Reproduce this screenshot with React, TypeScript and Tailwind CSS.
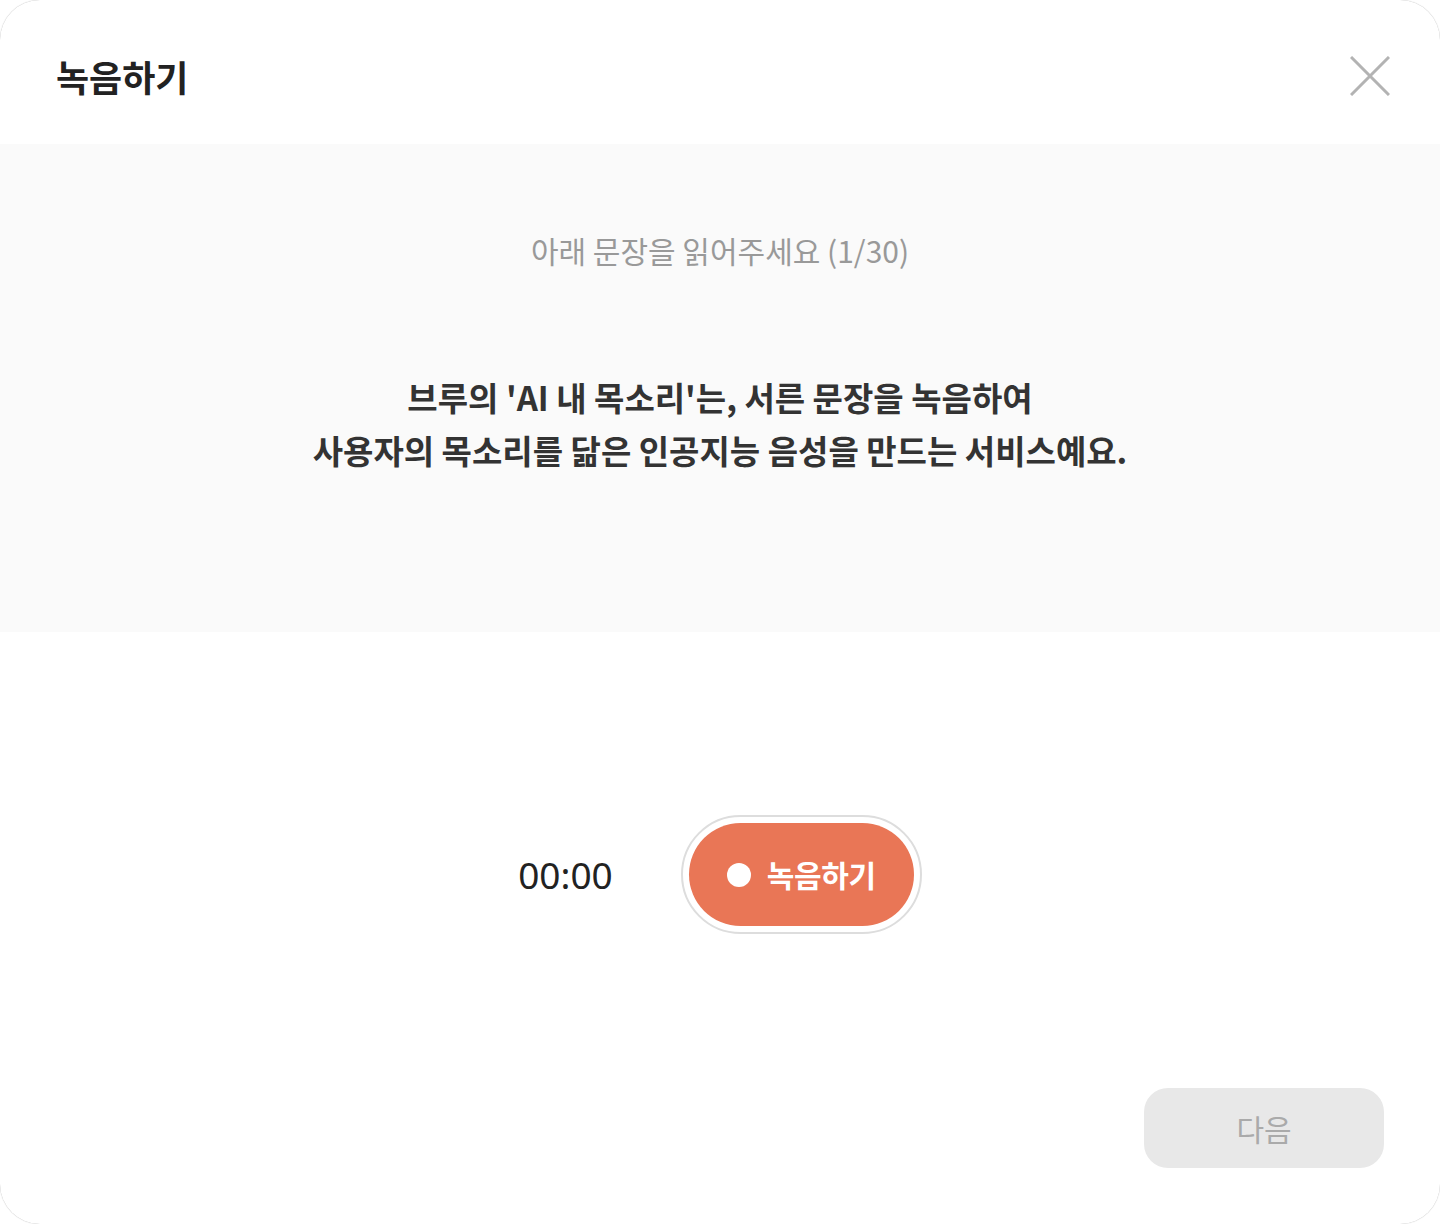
import React from 'react';

const font = { fontFamily: '"Noto Sans CJK KR", "Noto Sans", sans-serif' };

export default function App() {
  return (
    <div className="w-[1440px] h-[1224px] bg-white" style={font}>
      <div className="w-full h-full rounded-[40px] overflow-hidden bg-white shadow-[0_0_1px_rgba(0,0,0,0.35)] flex flex-col">
        {/* Header */}
        <div className="h-[144px] flex items-center justify-between pl-[56px] pr-[50px] pt-[8px]">
          <h1 className="text-[36px] font-bold text-[#222222]">녹음하기</h1>
          <button className="w-[40px] h-[40px] text-[#b3b3b3]" aria-label="닫기">
            <svg width="40" height="40" viewBox="0 0 40 40" fill="none" stroke="currentColor" strokeWidth="3">
              <path d="M1 1L39 39M39 1L1 39" />
            </svg>
          </button>
        </div>

        {/* Sentence */}
        <div className="h-[488px] bg-[#fafafa] flex flex-col items-center pt-[82px]">
          <p className="text-[30px] text-[#999999] leading-[48px]">아래 문장을 읽어주세요 (1/30)</p>
          <p className="mt-[97px] text-[33px] font-bold text-[#333333] text-center leading-[53px]">
            브루의 'AI 내 목소리'는, 서른 문장을 녹음하여
            <br />
            사용자의 목소리를 닮은 인공지능 음성을 만드는 서비스예요.
          </p>
        </div>

        {/* Recorder */}
        <div className="flex-1 flex flex-col">
          <div className="flex items-center justify-center gap-[68px] pt-[183px]">
            <span className="text-[37px] text-[#222222]" style={{ fontFamily: '"Noto Sans", sans-serif' }}>00:00</span>
            <div className="rounded-full border-2 border-[#dddddd] p-[6px] bg-white">
              <button className="w-[225px] h-[103px] rounded-full bg-[#e97656] flex items-center justify-center gap-[16px] text-white">
                <span className="w-[24px] h-[24px] rounded-full bg-white" />
                <span className="text-[30px] font-bold tracking-[-0.01em]">녹음하기</span>
              </button>
            </div>
          </div>
          <div className="flex-1" />
          <div className="flex justify-end pr-[56px] pb-[56px]">
            <button className="w-[240px] h-[80px] rounded-[24px] bg-[#e8e8e8] text-[30px] text-[#aaaaaa]">다음</button>
          </div>
        </div>
      </div>
    </div>
  );
}
